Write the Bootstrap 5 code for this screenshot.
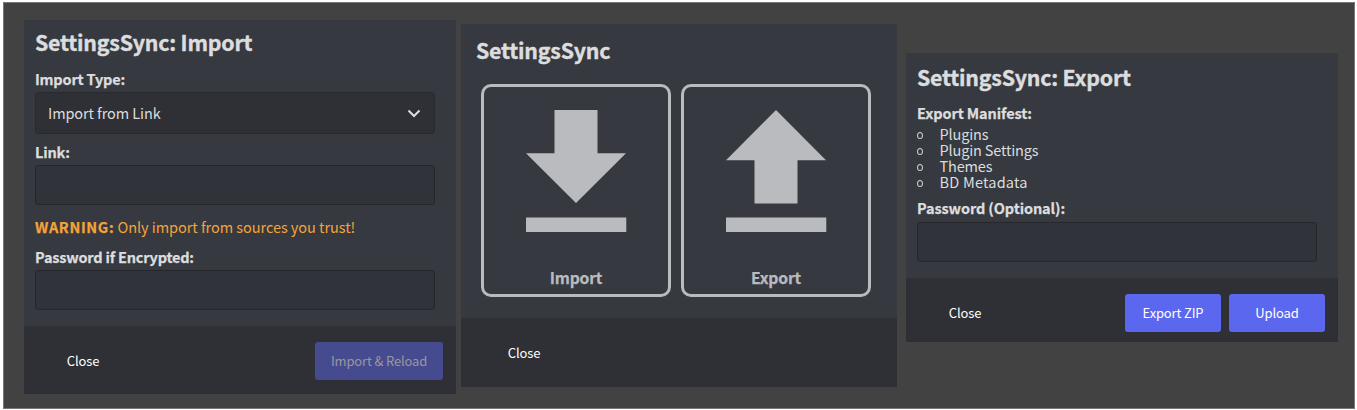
<!DOCTYPE html>
<html lang="en">
<head>
<meta charset="utf-8">
<meta name="viewport" content="width=device-width, initial-scale=1">
<title>SettingsSync</title>
<link href="https://cdn.jsdelivr.net/npm/bootstrap@5.3.0/dist/css/bootstrap.min.css" rel="stylesheet">
<style>
body{font-family:"Noto Sans CJK SC","Open Sans",sans-serif;background:#fff;color:#dcddde;font-size:14.5px;line-height:20px;height:410px;overflow:hidden}
.stage{margin:2px 2px 0 3px;height:407px;background:#424242;border:1px solid #777;padding-left:20px}
.panel{background:#36393f;width:432px}
.panel-import{margin-top:17px;height:374px}
.panel-home{margin:21px 9px 0 5px;width:436px;height:363px}
.panel-export{margin-top:50px;height:289px}
.pane{padding:0 21px 0 11px}
.panel-home .pane{padding:0 15px}
.foot{background:#2f3035;padding:16px 13px 0 11px;height:68px}
.panel-home .foot{height:69px;padding-left:15px}
.panel-export .foot{height:64px}
.title{font-size:21.3px;line-height:28px;font-weight:700;margin:0;white-space:nowrap;letter-spacing:-.2px;-webkit-text-stroke:.4px}
.panel-import .title{padding-top:8px;margin-bottom:13px}
.panel-home .title{padding-top:12px;margin-bottom:20px}
.panel-export .title{padding-top:10px;margin-bottom:12px}
.field-label{display:block;font-weight:700;font-size:14.5px;line-height:20px;white-space:nowrap;letter-spacing:-.2px;-webkit-text-stroke:.25px}
.panel-export .field-label{letter-spacing:-.1px}
.field,.picker{display:block;width:400px;height:40px;margin-top:3px;background:#303339;border:1px solid #25272b;border-radius:3px;color:#dcddde;padding:0 12px;outline:0}
.panel-export .field{margin-top:4px}
.picker{height:42px;background:#2f3035;border-color:#292a2e;border-radius:4px;font-size:14.5px;text-align:left;margin-bottom:8px;letter-spacing:-.1px}
.warn{color:#f3a43a;white-space:nowrap;margin:12px 0 10px;letter-spacing:-.05px}
.warn b{letter-spacing:.65px;-webkit-text-stroke:.25px}
.act{font-size:13px;line-height:20px;height:38px;width:96px;border:0;border-radius:3px;color:#fff;padding:0;white-space:nowrap;letter-spacing:-.15px}
.act-fill{background:#5b67ee}
.act-off{background:#464b90;color:#97989d;width:128px}
.tiles{gap:10px;padding-left:5px}
.tile{width:190px;height:213px;border:3px solid #b9bbbe;border-radius:10px;background:none;color:#b9bbbe;font-size:15.7px;font-weight:700;padding:0;letter-spacing:-.2px;-webkit-text-stroke:.25px}
.tile svg{margin-top:23px;overflow:visible}
.tile span{line-height:20px;margin-top:34px}
.manifest{list-style:none;padding:0;margin:3px 0 8px;letter-spacing:-.17px}
.manifest li{height:16px;line-height:16px}
.manifest li:last-child{letter-spacing:.2px}
.ring{width:6px;height:7px;border:1.2px solid #c8c9cb;border-radius:50%;margin:3px 16.600px 0 0}
</style>
</head>
<body>
<main class="stage d-flex align-items-start">
  <section class="panel panel-import d-flex flex-column flex-shrink-0">
    <div class="pane flex-grow-1">
      <h1 class="title">SettingsSync: Import</h1>
      <div class="field-label">Import Type:</div>
      <button class="picker d-flex align-items-center justify-content-between">
        <span>Import from Link</span>
        <svg width="16" height="16" viewBox="0 0 16 16" fill="none" stroke="#dcddde" stroke-width="2"><path d="M2.500 5.500 8 11l5.500-5.500"/></svg>
      </button>
      <label class="field-label" for="link">Link:</label>
      <input id="link" class="field">
      <div class="warn"><b>WARNING:</b> <span>Only import from sources you trust!</span></div>
      <label class="field-label" for="pw">Password if Encrypted:</label>
      <input id="pw" type="password" class="field">
    </div>
    <div class="foot d-flex justify-content-between"><button class="btn act">Close</button><button class="btn act act-off">Import &amp; Reload</button></div>
  </section>
  <section class="panel panel-home d-flex flex-column flex-shrink-0">
    <div class="pane flex-grow-1">
      <h1 class="title">SettingsSync</h1>
      <div class="tiles d-flex">
        <button class="tile d-flex flex-column align-items-center"><svg width="100" height="124" fill="#b9bbbe"><path d="M28.500 0h43v43.200H100L50 93 0 43.200h28.500zM0 107.500h100.300v14.400H0z"/></svg><span>Import</span></button>
        <button class="tile d-flex flex-column align-items-center"><svg width="100" height="124" fill="#b9bbbe"><path d="M50 0l50 50.200H71.500v43.200h-43V50.200H0zM0 107.500h100.300v14.400H0z"/></svg><span>Export</span></button>
      </div>
    </div>
    <div class="foot d-flex"><button class="btn act">Close</button></div>
  </section>
  <section class="panel panel-export d-flex flex-column flex-shrink-0">
    <div class="pane flex-grow-1">
      <h1 class="title">SettingsSync: Export</h1>
      <div class="field-label">Export Manifest:</div>
      <ul class="manifest">
        <li class="d-flex align-items-center"><i class="ring"></i><span>Plugins</span></li>
        <li class="d-flex align-items-center"><i class="ring"></i><span>Plugin Settings</span></li>
        <li class="d-flex align-items-center"><i class="ring"></i><span>Themes</span></li>
        <li class="d-flex align-items-center"><i class="ring"></i><span>BD Metadata</span></li>
      </ul>
      <label class="field-label" for="opt">Password (Optional):</label>
      <input id="opt" type="password" class="field">
    </div>
    <div class="foot d-flex"><button class="btn act">Close</button><button class="btn act act-fill ms-auto">Export ZIP</button><button class="btn act act-fill ms-2">Upload</button></div>
  </section>
</main>
<script src="https://cdn.jsdelivr.net/npm/bootstrap@5.3.0/dist/js/bootstrap.bundle.min.js"></script>
</body>
</html>
